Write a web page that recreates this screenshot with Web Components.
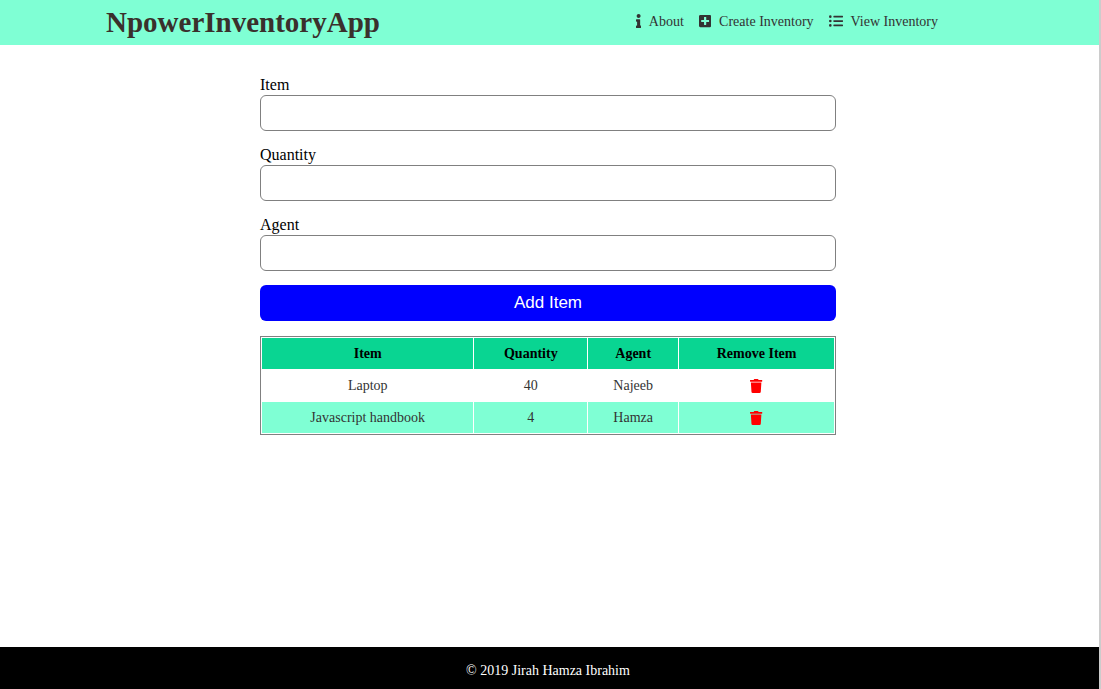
<!DOCTYPE html>
<html lang="en">
<head>
<meta charset="utf-8">
<title>NpowerInventoryApp</title>
<style>
body { margin: 0; font-family: "Liberation Serif", "Times New Roman", serif; font-size: 16px; color: #000; background: #fff; }
</style>
</head>
<body>
<inventory-app></inventory-app>
<script>
const define = (name, html, setup) => {
  const template = document.createElement('template');
  template.innerHTML = html;
  customElements.define(name, class extends HTMLElement {
    constructor() {
      super();
      this.attachShadow({ mode: 'open' }).append(template.content.cloneNode(true));
    }
    connectedCallback() { if (setup) setup(this, this.shadowRoot); }
  });
};

const icons = {
  info: ['0 0 192 512', 'M20 424.229h20V279.771H20c-11.046 0-20-8.954-20-20V212c0-11.046 8.954-20 20-20h112c11.046 0 20 8.954 20 20v212.229h20c11.046 0 20 8.954 20 20V492c0 11.046-8.954 20-20 20H20c-11.046 0-20-8.954-20-20v-47.771c0-11.046 8.954-20 20-20zM96 0C56.235 0 24 32.235 24 72s32.235 72 72 72 72-32.235 72-72S135.764 0 96 0z'],
  plus: ['0 0 448 512', 'M400 32H48C21.500 32 0 53.500 0 80v352c0 26.500 21.500 48 48 48h352c26.500 0 48-21.500 48-48V80c0-26.500-21.500-48-48-48zm-32 252c0 6.600-5.400 12-12 12h-92v92c0 6.600-5.400 12-12 12h-56c-6.600 0-12-5.400-12-12v-92H92c-6.600 0-12-5.400-12-12v-56c0-6.600 5.400-12 12-12h92v-92c0-6.600 5.400-12 12-12h56c6.600 0 12 5.400 12 12v92h92c6.600 0 12 5.400 12 12v56z'],
  list: ['0 0 512 512', 'M48 48a48 48 0 1 0 48 48 48 48 0 0 0-48-48zm0 160a48 48 0 1 0 48 48 48 48 0 0 0-48-48zm0 160a48 48 0 1 0 48 48 48 48 0 0 0-48-48zM176 64h320a16 16 0 0 1 16 16v32a16 16 0 0 1-16 16H176a16 16 0 0 1-16-16V80a16 16 0 0 1 16-16zm0 160h320a16 16 0 0 1 16 16v32a16 16 0 0 1-16 16H176a16 16 0 0 1-16-16v-32a16 16 0 0 1 16-16zm0 160h320a16 16 0 0 1 16 16v32a16 16 0 0 1-16 16H176a16 16 0 0 1-16-16v-32a16 16 0 0 1 16-16z'],
  trash: ['0 0 448 512', 'M432 32H312l-9.400-18.700A24 24 0 0 0 281.100 0H166.800a23.720 23.720 0 0 0-21.400 13.300L136 32H16A16 16 0 0 0 0 48v32a16 16 0 0 0 16 16h416a16 16 0 0 0 16-16V48a16 16 0 0 0-16-16zM53.200 467a48 48 0 0 0 47.900 45h245.800a48 48 0 0 0 47.900-45L416 128H32z']
};

define('app-icon', `
<style>
:host { display: inline-flex; height: 14px; }
svg { display: block; height: 14px; width: auto; fill: currentColor; }
</style>
<svg aria-hidden="true"><path/></svg>`, (host, root) => {
  const [box, d] = icons[host.getAttribute('name')];
  const [, , w, h] = box.split(' ').map(Number);
  const svg = root.querySelector('svg');
  svg.setAttribute('viewBox', box);
  svg.style.aspectRatio = w + ' / ' + h;
  root.querySelector('path').setAttribute('d', d);
});

define('nav-link', `
<style>
:host { display: block; }
a { display: flex; align-items: flex-start; gap: 8px; color: #333; text-decoration: none; font-size: 14px; line-height: 16px; }
</style>
<a href="#"><slot name="icon"></slot><span><slot></slot></span></a>`);

define('app-header', `
<style>
:host { display: block; background: #7fffd4; color: #333; }
header { display: flex; align-items: center; justify-content: space-between; min-height: 45px; padding: 0 161px 0 106px; }
h1 { margin: 0; font-size: 29px; line-height: 33px; color: #3a302c; }
nav { display: flex; gap: 15px; padding-bottom: 2px; }
</style>
<header>
  <h1>NpowerInventoryApp</h1>
  <nav>
    <nav-link><app-icon slot="icon" name="info"></app-icon>About</nav-link>
    <nav-link><app-icon slot="icon" name="plus"></app-icon>Create Inventory</nav-link>
    <nav-link><app-icon slot="icon" name="list"></app-icon>View Inventory</nav-link>
  </nav>
</header>`);

define('text-field', `
<style>
:host { display: block; }
label { display: block; font-size: 16px; line-height: 20px; }
input { display: block; box-sizing: border-box; width: 100%; height: 36px; margin: 0; padding: 0 10px; border: 1px solid #808080; border-radius: 6px; background: #fff; font: inherit; }
</style>
<label for="field"></label>
<input id="field" type="text">`, (host, root) => {
  root.querySelector('label').textContent = host.getAttribute('label');
});

define('item-form', `
<style>
:host { display: block; }
form { display: grid; gap: 14px; }
button { height: 36px; border: 0; border-radius: 6px; background: #00f; color: #fff; font: 17px/20px "Liberation Sans", Arial, sans-serif; }
</style>
<form>
  <text-field label="Item"></text-field>
  <text-field label="Quantity"></text-field>
  <text-field label="Agent"></text-field>
  <button type="button">Add Item</button>
</form>`);

define('item-table', `
<style>
:host { display: block; }
table { width: 100%; border: 1px solid #808080; border-collapse: separate; border-spacing: 1px; font-size: 14px; line-height: 15px; text-align: center; }
th, td { padding: 8px; }
th { background: #09d592; color: #000; }
td { color: #333; }
tbody tr:nth-child(even) td { background: #7fffd4; }
button { display: block; margin: 0 auto; padding: 0; border: 0; background: none; color: #f00; height: 14px; }
</style>
<table>
  <thead><tr><th>Item</th><th>Quantity</th><th>Agent</th><th>Remove Item</th></tr></thead>
  <tbody>
    <tr><td>Laptop</td><td>40</td><td>Najeeb</td><td><button type="button" aria-label="Remove"><app-icon name="trash"></app-icon></button></td></tr>
    <tr><td>Javascript handbook</td><td>4</td><td>Hamza</td><td><button type="button" aria-label="Remove"><app-icon name="trash"></app-icon></button></td></tr>
  </tbody>
</table>`);

define('app-footer', `
<style>
:host { display: block; background: #000; color: #fff; }
footer { padding: 16px 3px 10px 0; text-align: center; font-size: 14px; line-height: 16px; }
</style>
<footer><slot></slot></footer>`);

define('inventory-app', `
<style>
:host { display: flex; flex-direction: column; box-sizing: border-box; min-height: 100vh; border-right: 2px solid #ccc; }
main { flex: 1; display: flex; justify-content: center; padding: 30px 3px 30px 0; }
section { flex: 0 1 576px; display: flex; flex-direction: column; gap: 15px; }
</style>
<app-header></app-header>
<main><section>
  <item-form></item-form>
  <item-table></item-table>
</section></main>
<app-footer>© 2019 Jirah Hamza Ibrahim</app-footer>`);
</script>
</body>
</html>
